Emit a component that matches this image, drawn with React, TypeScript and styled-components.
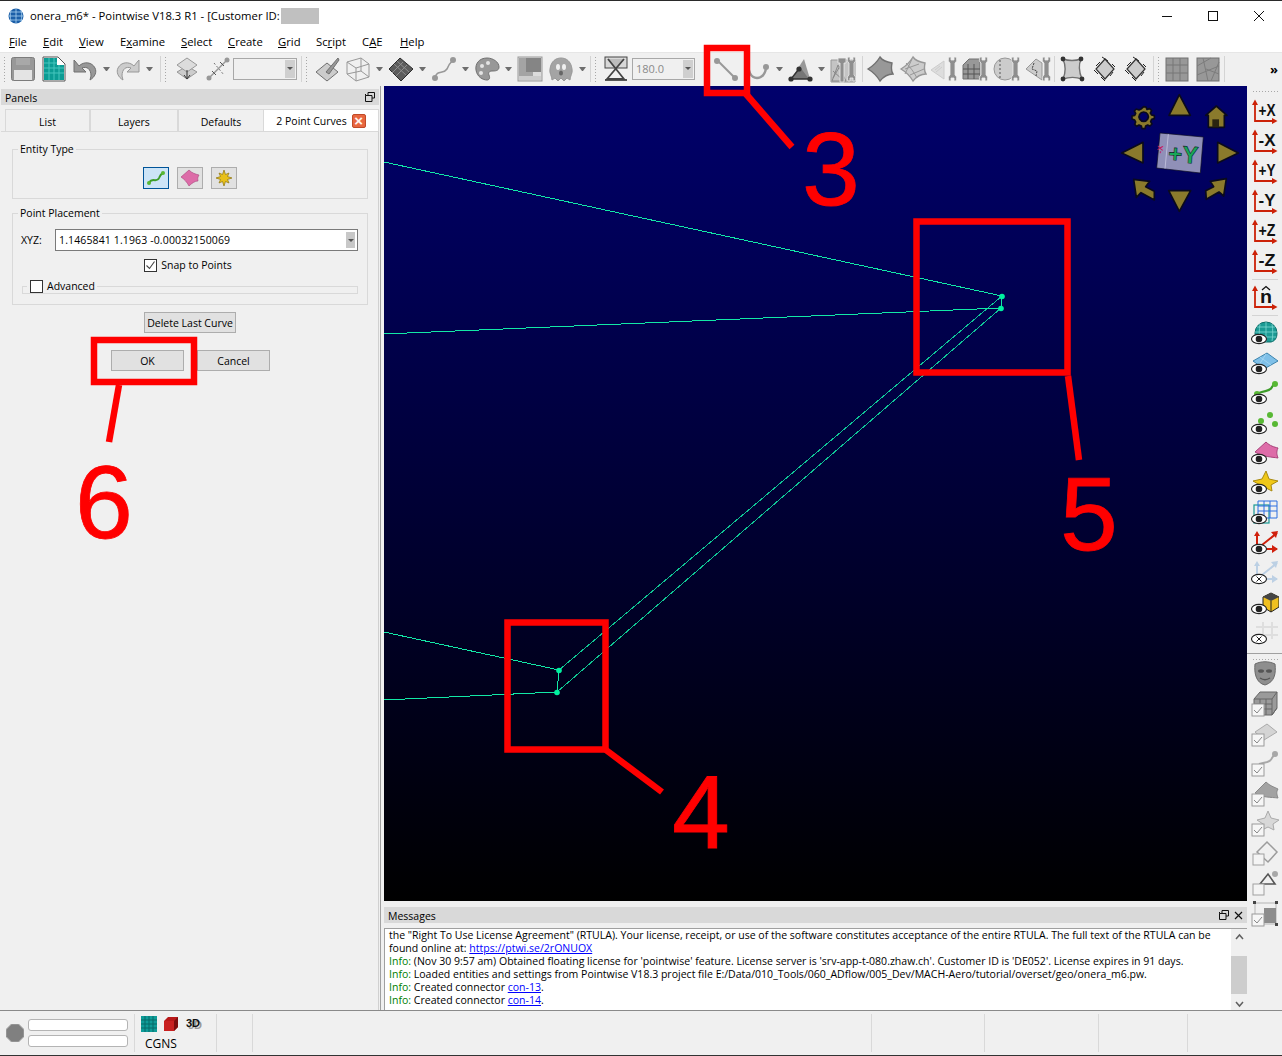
import { ReactNode } from "react";
import styled, { createGlobalStyle } from "styled-components";

const GlobalStyle = createGlobalStyle`
  html, body {
    margin: 0;
    padding: 0;
    background: #f0f0f0;
  }
  * {
    box-sizing: border-box;
  }
`;

const Window = styled.div`
  border-top: 1px solid #2a2a2a;
  color: #000000;
  display: flex;
  flex-direction: column;
  font-family: "Open Sans", "Noto Sans", sans-serif;
  font-size: 10.5px;
  height: 1056px;
  overflow: hidden;
  position: relative;
  width: 1282px;
`;

const TitleBar = styled.div`
  align-items: center;
  background: #ffffff;
  display: flex;
  flex: 0 0 29px;
  font-size: 11.3px;
  padding-left: 8px;
`;

const TitleText = styled.span`
  margin-left: 6px;
  white-space: nowrap;
`;

const CensorBlock = styled.span`
  background: #c0c0c0;
  height: 16px;
  margin-left: 1px;
  width: 38px;
`;

const WindowButtons = styled.div`
  display: flex;
  margin-left: auto;
`;

const WindowButton = styled.div`
  align-items: center;
  display: flex;
  height: 29px;
  justify-content: center;
  width: 46px;
`;

const MenuBar = styled.div`
  align-items: center;
  background: #ffffff;
  display: flex;
  flex: 0 0 22px;
  font-size: 11.3px;
`;

const MenuItem = styled.span<{ $width: number }>`
  padding-left: 9px;
  width: ${({ $width }) => $width}px;
`;

const Toolbar = styled.div`
  align-items: center;
  background: #f0f0f0;
  border-top: 1px solid #e6e6e6;
  display: flex;
  flex: 0 0 34px;
  padding-bottom: 2px;
`;

const Grip = styled.div<{ $after?: number }>`
  background-image: radial-gradient(#a8a8a8 35%, transparent 40%);
  background-size: 3px 3px;
  height: 26px;
  margin: 0 ${({ $after }) => $after ?? 3}px 0 3px;
  width: 4px;
`;

const ToolSeparator = styled.div<{ $left?: number }>`
  background: #d4d4d4;
  height: 26px;
  margin-left: ${({ $left }) => $left ?? 0}px;
  width: 1px;
`;

const ToolButton = styled.div<{ $gap?: number }>`
  align-items: center;
  display: flex;
  flex: 0 0 ${({ $gap }) => $gap ?? 31}px;
  height: 30px;
  justify-content: center;
`;

const DropArrow = styled.div`
  border-left: 3.5px solid transparent;
  border-right: 3.5px solid transparent;
  border-top: 4px solid #6e6e6e;
  flex: 0 0 7px;
  height: 0;
  margin: 0 2.5px;
`;

const Combo = styled.div<{ $width: number }>`
  align-items: center;
  background: #f0f0f0;
  border: 1px solid #a8a8a8;
  color: #8a8a8a;
  display: flex;
  flex: 0 0 ${({ $width }) => $width}px;
  font-size: 11px;
  height: 22px;
  justify-content: space-between;
  padding: 1px 1px 1px 3px;
`;

const ComboDrop = styled.div`
  align-items: center;
  background: #cfcfcf;
  display: flex;
  height: 100%;
  justify-content: center;
  width: 10px;
`;

const SmallTriangle = styled.div`
  border-left: 3px solid transparent;
  border-right: 3px solid transparent;
  border-top: 3px solid #555555;
  height: 0;
  width: 0;
`;

const OverflowMark = styled.div`
  font-size: 13px;
  font-weight: 700;
  margin-left: auto;
  padding-right: 4px;
`;

const MainRow = styled.div`
  display: flex;
  flex: 1;
  min-height: 0;
`;

const LeftPanel = styled.div`
  background: #f0f0f0;
  border-right: 1px solid #a0a0a0;
  display: flex;
  flex: 0 0 380px;
  flex-direction: column;
  padding: 3px 1px 0 1px;
`;

const DockHeader = styled.div`
  align-items: center;
  background: #d9d9d9;
  display: flex;
  flex: 0 0 16px;
  font-size: 10.5px;
  justify-content: space-between;
  padding: 0 4px;
`;

const DockTitle = styled.span`
  padding-top: 2px;
`;

const DockButtons = styled.div`
  align-items: center;
  display: flex;
  gap: 5px;
`;

const TabStrip = styled.div`
  display: flex;
  margin-top: 4px;
  padding-left: 4px;
`;

const Tab = styled.div<{ $width: number; $active?: boolean }>`
  align-items: center;
  background: ${({ $active }) => ($active ? "#ffffff" : "#f0f0f0")};
  border: 1px solid #d9d9d9;
  border-bottom: 0;
  border-left-width: ${({ $active }) => ($active ? 0 : 1)}px;
  display: flex;
  gap: 5px;
  height: 22px;
  justify-content: center;
  padding-top: ${({ $active }) => ($active ? 0 : 2)}px;
  width: ${({ $width }) => $width}px;
`;

const CloseTab = styled.div`
  align-items: center;
  background: #e8663f;
  border: 1px solid #c04a28;
  border-radius: 2px;
  color: #fff4ee;
  display: flex;
  font-family: "Liberation Sans", sans-serif;
  font-size: 15px;
  font-weight: 700;
  height: 14px;
  justify-content: center;
  line-height: 1;
  width: 14px;
`;

const PanelBody = styled.div`
  border-right: 1px solid #d0d0d0;
  border-top: 1px solid #d9d9d9;
  display: flex;
  flex: 1;
  flex-direction: column;
  padding: 11px 10px 0 11px;
`;

const Group = styled.fieldset<{ $height: number }>`
  border: 1px solid #d9d9d9;
  height: ${({ $height }) => $height}px;
  margin: 0 0 8px 0;
  min-width: 0;
  padding: 0 8px;
`;

const GroupLegend = styled.legend`
  font-size: 10.5px;
  line-height: 12px;
  margin-left: -3px;
  padding: 0 2px;
`;

const EntityRow = styled.div`
  display: flex;
  gap: 8px;
  justify-content: center;
  padding-top: 12px;
`;

const EntityButton = styled.div<{ $selected?: boolean }>`
  align-items: center;
  background: ${({ $selected }) => ($selected ? "#cce4f7" : "#e1e1e1")};
  border: 1px solid ${({ $selected }) => ($selected ? "#005499" : "#adadad")};
  display: flex;
  height: 22px;
  justify-content: center;
  width: 26px;
`;

const XyzRow = styled.div`
  align-items: center;
  display: flex;
  margin-top: 10px;
`;

const XyzLabel = styled.span`
  flex: 0 0 34px;
`;

const XyzInput = styled.div`
  align-items: center;
  background: #ffffff;
  border: 1px solid #7a7a7a;
  display: flex;
  flex: 0 0 303px;
  height: 22px;
  justify-content: space-between;
  letter-spacing: 0.13px;
  padding: 0 2px 0 3px;
`;

const InputDrop = styled.div`
  align-items: center;
  background: #c8c8c8;
  display: flex;
  height: 16px;
  justify-content: center;
  width: 9px;
`;

const SnapRow = styled.div`
  align-items: center;
  display: flex;
  gap: 4px;
  justify-content: center;
  margin-top: 7px;
  padding-right: 4px;
`;

const CheckBox = styled.div`
  align-items: center;
  background: #ffffff;
  border: 1px solid #333333;
  display: flex;
  height: 13px;
  justify-content: center;
  width: 13px;
`;

const AdvancedRow = styled.div`
  display: flex;
  margin: 7px 1px 0 9px;
  position: relative;
`;

const AdvancedFrame = styled.div`
  border: 1px solid #d9d9d9;
  height: 8px;
  left: -8px;
  position: absolute;
  right: 0;
  top: 7px;
`;

const AdvancedLegend = styled.div`
  align-items: center;
  background: #f0f0f0;
  display: flex;
  gap: 4px;
  margin-left: -3px;
  padding: 0 2px 0 3px;
  position: relative;
`;

const ButtonLine = styled.div<{ $left: number; $top: number }>`
  display: flex;
  gap: 13px;
  margin-left: ${({ $left }) => $left}px;
  margin-top: ${({ $top }) => $top}px;
`;

const PushButton = styled.div<{ $width: number }>`
  align-items: center;
  background: #e1e1e1;
  border: 1px solid #adadad;
  display: flex;
  height: 21px;
  justify-content: center;
  width: ${({ $width }) => $width}px;
`;

const CenterColumn = styled.div`
  display: flex;
  flex: 0 0 866px;
  flex-direction: column;
  padding-left: 3px;
`;

const Viewport = styled.div`
  background: linear-gradient(#00006c 0%, #000000 100%);
  flex: 0 0 815px;
  overflow: hidden;
  position: relative;
`;

const CurveLayer = styled.svg`
  display: block;
  height: 815px;
  width: 863px;
`;

const NavCube = styled.svg`
  height: 136px;
  position: absolute;
  right: 0;
  top: 0;
  width: 136px;
`;

const MessageDock = styled.div`
  display: flex;
  flex: 1;
  flex-direction: column;
  min-height: 0;
  padding-top: 6px;
`;

const MessagePane = styled.div`
  background: #ffffff;
  border-left: 1px solid #a0a0a0;
  border-top: 1px solid #a0a0a0;
  display: flex;
  flex: 1;
  margin-top: 5px;
  min-height: 0;
`;

const MessageText = styled.div`
  flex: 1;
  font-size: 10.54px;
  line-height: 13px;
  padding: 0 0 0 4px;
`;

const InfoWord = styled.span`
  color: #008000;
`;

const MessageLink = styled.span`
  color: #0000ff;
  text-decoration: underline;
`;

const ScrollBar = styled.div`
  align-items: center;
  background: #f0f0f0;
  display: flex;
  flex: 0 0 16px;
  flex-direction: column;
  justify-content: space-between;
  padding: 4px 0 2px 0;
  position: relative;
`;

const ScrollThumb = styled.div`
  background: #cdcdcd;
  height: 38px;
  left: 0;
  position: absolute;
  top: 27px;
  width: 16px;
`;

const RightToolbar = styled.div`
  background: #f0f0f0;
  display: flex;
  flex: 0 0 36px;
  flex-direction: column;
  padding-top: 3px;
`;

const VerticalGrip = styled.div`
  background-image: radial-gradient(#a8a8a8 35%, transparent 40%);
  background-size: 3px 3px;
  flex: 0 0 4px;
  margin: 1px 5px 2px 5px;
`;

const LowerGrip = styled(VerticalGrip)`
  margin-bottom: -4px;
`;

const SideButton = styled.div`
  align-items: center;
  display: flex;
  flex: 0 0 30px;
  justify-content: center;
`;

const SideSeparator = styled.div<{ $full?: boolean }>`
  background: ${({ $full }) => ($full ? "#a0a0a0" : "#d4d4d4")};
  flex: 0 0 1px;
  margin: ${({ $full }) => ($full ? "5px 0 3px 0" : "2.5px 5px")};
`;

const StatusBar = styled.div`
  align-items: stretch;
  background: #f0f0f0;
  border-bottom: 1px solid #333333;
  border-top: 1px solid #8a8a8a;
  display: flex;
  flex: 0 0 45px;
`;

const StatusCell = styled.div<{ $width: number }>`
  border-right: 1px solid #d9d9d9;
  flex: 0 0 ${({ $width }) => $width}px;
  margin: 3px 0 3px 0;
`;

const LightCell = styled(StatusCell)`
  align-items: center;
  display: flex;
  gap: 4px;
  padding-left: 6px;
`;

const ProgressStack = styled.div`
  display: flex;
  flex-direction: column;
  gap: 4px;
`;

const ProgressTrack = styled.div`
  background: #ffffff;
  border: 1px solid #b4b4b4;
  border-radius: 3px;
  height: 12px;
  width: 100px;
`;

const GridCell = styled(StatusCell)`
  display: flex;
  flex-direction: column;
  padding: 2px 0 0 6px;
`;

const SolverIcons = styled.div`
  align-items: center;
  display: flex;
  gap: 6px;
`;

const SolverName = styled.div`
  font-size: 12px;
  margin: 3px 0 0 4px;
`;

const Annotations = styled.svg`
  height: 1056px;
  left: 0;
  pointer-events: none;
  position: absolute;
  top: -1px;
  width: 1282px;
`;

const GREY = "#989898";
const DARK = "#707070";
const LIGHT = "#cccccc";
const WRENCH = "M19 2c-1 2-1 5 1 6v12c-2 1-2 4-1 6h2v-3h3v3h2c1-2 1-5-1-6V8c2-1 2-4 1-6h-2v3h-3V2z";

const Wrench = () => <path d={WRENCH} fill="#8e8e8e" stroke="#ececec" strokeWidth="0.8" />;

const Ico = ({ children, size = 28 }: { children: ReactNode; size?: number }) => (
  <svg width={size} height={size} viewBox="0 0 28 28">
    {children}
  </svg>
);

const toolIcons: Record<string, ReactNode> = {
  save: (
    <>
      <rect x="2.5" y="2.5" width="23" height="23" rx="2" fill={GREY} stroke="#7c7c7c" />
      <rect x="7" y="3" width="14" height="7" fill="#a8a8a8" />
      <rect x="5" y="15" width="18" height="10" fill="#e4e4e4" />
    </>
  ),
  page: (
    <>
      <path d="M3 2h15l7 7v17H3z" fill="#ffffff" stroke="#555" />
      <path d="M4 3h13v7h7v15H4z" fill="#0c9c94" />
      <path d="M9 3v22M14 3v22M19 10v15M4 8h13M4 13h20M4 18h20" stroke="#46c6be" />
    </>
  ),
  undo: <path d="M3 5v12h12l-4-4c5-2 9 1 9 8l-1 4c5-3 7-8 5-12-3-6-11-7-16-2L4 6z" fill={GREY} stroke={DARK} />,
  redo: <path d="M25 5v12H13l4-4c-5-2-9 1-9 8l1 4c-5-3-7-8-5-12 3-6 11-7 16-2l4-5z" fill={LIGHT} stroke={GREY} />,
  layers: (
    <>
      <path d="M14 11l10 6-10 7-10-7z" fill={LIGHT} stroke={GREY} />
      <path d="M14 3l10 7-10 7-10-7z" fill="#dcdcdc" stroke={GREY} />
      <path d="M14 15v8M11 20l3 4 3-4" stroke="#333" fill="none" />
    </>
  ),
  split: (
    <>
      <path d="M4 24L24 4" stroke={GREY} strokeWidth="1.5" />
      <path d="M10 8l10 12" stroke={DARK} strokeDasharray="2 2" />
      <circle cx="5" cy="23" r="2.5" fill={GREY} />
      <circle cx="23" cy="5" r="2.5" fill={GREY} />
      <path d="M16 7l4 4M8 16l4 4" stroke="#555" />
    </>
  ),
  brush: (
    <>
      <path d="M3 17l11-9 11 9-11 9z" fill={LIGHT} stroke={DARK} />
      <path d="M13 17L25 3l1 2-10 14z" fill={GREY} stroke={DARK} />
    </>
  ),
  wire: <path d="M3 7l14-4 8 6v13l-13 4-9-7zM3 7l9 6v13M12 13l13-4M17 3v13L3 19M17 16l8 6" fill="none" stroke={GREY} />,
  mesh: (
    <>
      <path d="M2 14L13 3l13 11-12 12z" fill="#5c5c5c" stroke="#2c2c2c" />
      <path d="M7 9l12 11M10 6l12 11M5 18L16 7M9 21L20 10" stroke="#8e8e8e" />
    </>
  ),
  curve: (
    <>
      <path d="M5 23c2-9 8-3 12-9 1-3 3-6 6-9" fill="none" stroke={GREY} strokeWidth="1.6" />
      <circle cx="5" cy="23" r="3" fill={GREY} />
      <circle cx="23" cy="5" r="3" fill={GREY} />
    </>
  ),
  palette: (
    <>
      <path d="M14 3C6 3 2 9 3 15c1 7 7 10 11 10 3 0 3-3 2-5s0-4 3-4 7 0 7-4c0-5-6-9-12-9z" fill={GREY} stroke={DARK} />
      <circle cx="9" cy="11" r="2" fill="#e4e4e4" />
      <circle cx="15" cy="8" r="2" fill="#e4e4e4" />
      <circle cx="8" cy="18" r="2" fill="#e4e4e4" />
    </>
  ),
  squares: (
    <>
      <rect x="2" y="2" width="24" height="24" fill="#dcdcdc" stroke="#999" />
      <rect x="3" y="3" width="14" height="20" fill="#a4a4a4" />
      <rect x="10" y="3" width="15" height="14" fill="#858585" />
      <rect x="3" y="21" width="22" height="4" fill={LIGHT} />
    </>
  ),
  ghost: (
    <>
      <path d="M5 25c0-4-3-7-2-11C4 6 9 3 14 3s10 3 11 11c1 4-2 7-2 11l-3-2-3 3-3-3-3 3-3-3z" fill="#a4a4a4" stroke={GREY} />
      <ellipse cx="11" cy="12" rx="2" ry="3" fill="#f0f0f0" />
      <ellipse cx="17" cy="12" rx="2" ry="3" fill="#f0f0f0" />
      <ellipse cx="14" cy="18" rx="2" ry="2.5" fill="#666" />
    </>
  ),
  plane: (
    <>
      <rect x="3" y="2" width="22" height="11" fill="#d8d8d8" stroke="#444" />
      <path d="M14 13l-8-9h16z" fill="#bcbcbc" />
      <path d="M6 4l16 20H5L22 4" fill="none" stroke="#444" strokeWidth="1.8" />
      <path d="M3 25h22" stroke="#444" strokeWidth="1.8" />
    </>
  ),
  line: (
    <>
      <path d="M6 6l17 17" stroke={GREY} strokeWidth="2" />
      <circle cx="5" cy="6" r="3" fill={GREY} />
      <circle cx="23" cy="23" r="3" fill={GREY} />
    </>
  ),
  arc: (
    <>
      <path d="M5 4c-1 12 3 19 9 19s8-5 9-9" fill="none" stroke={GREY} strokeWidth="2.4" />
      <circle cx="23" cy="12" r="3" fill={GREY} />
    </>
  ),
  wedge: (
    <>
      <path d="M5 24L18 4l6 20z" fill={GREY} />
      <path d="M14 12L6 24h17" fill="#767676" />
      <path d="M5 24h19M5 24l8-10" stroke="#333" strokeWidth="1.4" />
      <circle cx="5" cy="24" r="2.6" fill="#333" />
      <circle cx="24" cy="24" r="2.6" fill="#333" />
      <circle cx="13" cy="14" r="2.6" fill="#333" />
    </>
  ),
  tools: (
    <>
      <path d="M2 5h24v22H2z" fill="#c4c4c4" stroke={GREY} />
      <path d="M3 26L9 10l8 16zM4 16l11 10M11 11l-7 12" fill="none" stroke="#888" />
      <path d="M9 3h8v5h-2v19h-4V8H9z" fill="#8e8e8e" stroke="#eee" strokeWidth="0.8" />
      <Wrench />
    </>
  ),
  domain: <path d="M14 2c2 3 6 5 12 6-1 5-1 8 1 11-5 0-9 2-13 7-3-5-7-9-12-12 5-3 9-7 12-12z" fill={GREY} stroke={DARK} strokeWidth="1.4" />,
  domainGrid: (
    <>
      <path d="M14 2c2 3 6 5 12 6-1 5-1 8 1 11-5 0-9 2-13 7-3-5-7-9-12-12 5-3 9-7 12-12z" fill={LIGHT} stroke={GREY} strokeWidth="1.4" />
      <path d="M7 8c4 4 8 9 11 15M13 4l-7 15M6 14l14-5M11 20l14-6" stroke={GREY} fill="none" />
    </>
  ),
  wrenchA: (
    <>
      <path d="M1 15L14 6v18z" fill="#dddddd" stroke={LIGHT} />
      <path d="M5 15l5-4M6 17l6-5" stroke={LIGHT} />
      <Wrench />
    </>
  ),
  wrenchB: (
    <>
      <path d="M2 10l6-6h11v20H2z" fill={GREY} stroke={DARK} />
      <path d="M2 14h17M2 19h17M7 9v15M13 9v15" stroke="#555" />
      <Wrench />
    </>
  ),
  wrenchC: (
    <>
      <circle cx="12" cy="14" r="11" fill={LIGHT} stroke={GREY} />
      <path d="M7 5v18" stroke="#555" strokeDasharray="2 2" />
      <Wrench />
    </>
  ),
  wrenchD: (
    <>
      <path d="M2 14L12 4l6 4v17z" fill={LIGHT} stroke={GREY} />
      <path d="M10 8l-2 6 5 2-1 5" stroke="#444" strokeDasharray="2 1" fill="none" />
      <Wrench />
    </>
  ),
  patch: (
    <>
      <path d="M5 4c6 2 12 2 18 0-3 7-2 13 1 20-6-2-13-2-19 0 3-7 3-13 0-20z" fill={LIGHT} stroke={DARK} strokeWidth="1.4" />
      <circle cx="5" cy="4" r="2.4" fill="#333" />
      <circle cx="23" cy="4" r="2.4" fill="#333" />
      <circle cx="5" cy="24" r="2.4" fill="#333" />
      <circle cx="24" cy="24" r="2.4" fill="#333" />
    </>
  ),
  diamond: (
    <>
      <path d="M14 4l9 10-9 10-9-10z" fill="#cccccc" stroke="#333" strokeWidth="1.2" />
      <path d="M11 2l6 4M21 9l3 3M22 17l-3 4M5 11l4-4M3 15l4 4M10 22l4 4" stroke="#222" />
    </>
  ),
  struct: (
    <>
      <rect x="3" y="3" width="22" height="23" fill={GREY} stroke={DARK} />
      <path d="M10 3v23M17 3v23M3 10h22M3 18h22" stroke="#777" />
    </>
  ),
  unstruct: (
    <>
      <rect x="3" y="3" width="22" height="23" fill={GREY} stroke={DARK} />
      <path d="M3 11L17 3M3 20l22-9M9 3l5 23M25 19L12 14M17 26l8-19" stroke="#7c7c7c" />
    </>
  ),
};

const Tool = ({ name, gap, size = 28 }: { name: string; gap?: number; size?: number }) => (
  <ToolButton $gap={gap}>
    <Ico size={size}>{toolIcons[name]}</Ico>
  </ToolButton>
);

const Eye = ({ crossed }: { crossed?: boolean }) => (
  <g>
    <ellipse cx="8" cy="20" rx="7.5" ry="4.6" fill="#ffffff" stroke="#222" strokeWidth="1.1" />
    {crossed ? <path d="M5.5 17.5l5 5M10.5 17.5l-5 5" stroke="#222" /> : <circle cx="8" cy="20" r="3.3" fill="#222" />}
  </g>
);

const Check = () => (
  <g>
    <rect x="1" y="15" width="12" height="12" fill="#f6f6f6" stroke="#9a9a9a" />
    <path d="M3 21l3 3 5-6" stroke="#888" fill="none" />
  </g>
);

const AxisIcon = ({ label, hat }: { label: string; hat?: boolean }) => (
  <svg width="26" height="26" viewBox="0 0 26 26">
    <path d="M3 5v18h19" fill="none" stroke="#cc2208" strokeWidth="1.8" />
    <path d="M0 7L3 1.5 6 7zM20 20l5.5 3-5.5 3z" fill="#cc2208" />
    <text
      x={hat ? 8 : 6.5}
      y={hat ? 19 : 17.5}
      fontFamily="Liberation Sans"
      fontWeight="700"
      fontSize={hat ? 18 : 16.5}
      fill="#111"
      textLength={hat ? 12 : 17}
      lengthAdjust="spacingAndGlyphs"
    >
      {label}
    </text>
    {hat ? <path d="M10 6l4-3.5L18 6" fill="none" stroke="#111" strokeWidth="1.3" /> : null}
  </svg>
);

const sideIcons: Record<string, ReactNode> = {
  globe: (
    <>
      <path d="M4 14a11 11 0 0 1 22 0c0 5-2 8-6 9H8c-3-2-4-5-4-9z" fill="#1a9a94" stroke="#0d6e6a" />
      <path d="M15 3v20M9 5c-1 6-1 12 0 17M21 5c1 6 1 12 0 17M4 13h22M6 8h18M5 18h20" stroke="#7fd8d2" strokeWidth="0.8" fill="none" />
      <Eye />
    </>
  ),
  plane: (
    <>
      <path d="M2 12L16 4l11 8-14 8z" fill="#7fc0e8" stroke="#3d84ad" />
      <path d="M9 8l11 8M15 5l-7 11" stroke="#a9d8f2" strokeWidth="0.8" />
      <Eye />
    </>
  ),
  curve: (
    <>
      <path d="M8 14c6-3 11-1 13-6l2-3" fill="none" stroke="#3c9c28" strokeWidth="2.2" />
      <circle cx="24" cy="5" r="3" fill="#58b834" />
      <circle cx="6" cy="15" r="3" fill="#58b834" />
      <Eye />
    </>
  ),
  points: (
    <>
      <circle cx="19" cy="6" r="3" fill="#58b834" />
      <circle cx="10" cy="12" r="3" fill="#58b834" />
      <circle cx="24" cy="15" r="3" fill="#58b834" />
      <Eye />
    </>
  ),
  domain: (
    <>
      <path d="M4 13L15 3c4 4 8 5 12 6-2 4-1 7 0 10-6-1-15-1-23-6z" fill="#dd6ca8" stroke="#a8437a" />
      <Eye />
    </>
  ),
  star: (
    <>
      <path d="M15 2l3 8 9 2-7 4 1 6-6-3-7 3 1-6-7-4 9-2z" fill="#f0c818" stroke="#a88a10" />
      <Eye />
    </>
  ),
  grid: (
    <>
      <rect x="3" y="6" width="15" height="18" fill="none" stroke="#1a9a94" strokeWidth="1.2" />
      <path d="M7 2h19v17H7zM7 7h19M7 12h19M13 2v17M19 2v17" fill="none" stroke="#2c6fe0" strokeWidth="1" />
      <Eye />
    </>
  ),
  axes: (
    <>
      <path d="M6 20V5M6 20L26 4M6 20h20" stroke="#d0200c" strokeWidth="2" fill="none" />
      <path d="M3 7l3-5 3 5zM20 3l7-1-2 7zM21 16l6 4-6 4z" fill="#d0200c" />
      <Eye />
    </>
  ),
  axesOff: (
    <>
      <path d="M6 20V5M6 20L26 4M6 20h20" stroke="#bcd0e4" strokeWidth="2" fill="none" />
      <path d="M3 7l3-5 3 5zM20 3l7-1-2 7zM21 16l6 4-6 4z" fill="#bcd0e4" />
      <Eye crossed />
    </>
  ),
  cube: (
    <>
      <path d="M12 8l8-4 8 4v10l-8 5-8-5z" fill="#f0c020" stroke="#222" />
      <path d="M12 8l8 4 8-4-8-4z" fill="#444" />
      <path d="M20 12v11" stroke="#222" />
      <Eye />
    </>
  ),
  hash: (
    <>
      <path d="M12 3v17M21 3v17M5 8h22M5 16h22" stroke="#dedede" strokeWidth="2" />
      <Eye crossed />
    </>
  ),
  mask: (
    <>
      <path d="M4 5c6-3 14-3 20 0 1 9 0 18-10 21C5 24 3 14 4 5z" fill="#8e8e8e" stroke="#6a6a6a" />
      <ellipse cx="10" cy="12" rx="3" ry="1.8" fill="#555" />
      <ellipse cx="18" cy="12" rx="3" ry="1.8" fill="#555" />
      <path d="M9 19c3 2 7 2 10 0" stroke="#555" strokeWidth="1.5" fill="none" />
    </>
  ),
  block: (
    <>
      <path d="M3 10l6-7h17v16l-5 7H3z" fill="#9a9a9a" stroke="#666" />
      <path d="M3 15h18M3 20h18M9 10v16M15 10v16M21 10v16l5-7M3 10h18l5-7" fill="none" stroke="#666" />
      <Check />
    </>
  ),
  planeCheck: (
    <>
      <path d="M4 13L16 5l10 8-13 8z" fill="#d4d4d4" stroke="#aaa" />
      <Check />
    </>
  ),
  curveCheck: (
    <>
      <path d="M8 15c6-2 11-1 13-6l2-3" fill="none" stroke="#a8a8a8" strokeWidth="2" />
      <circle cx="24" cy="5" r="3" fill="#a8a8a8" />
      <Check />
    </>
  ),
  domainCheck: (
    <>
      <path d="M4 14L15 3c4 4 8 5 12 7-2 3-1 6 0 9-7-1-15 0-23-5z" fill="#a2a2a2" stroke="#888" />
      <Check />
    </>
  ),
  starCheck: (
    <>
      <path d="M17 2l3 7 8 2-6 4 1 6-6-3-6 3 1-6-6-4 8-2z" fill="#d8d8d8" stroke="#aaa" />
      <Check />
    </>
  ),
  diamondBox: (
    <>
      <path d="M6 13L16 3l10 10-9 10z" fill="none" stroke="#9c9c9c" strokeWidth="1.5" />
      <rect x="2" y="15" width="11" height="11" fill="#f4f4f4" stroke="#a0a0a0" />
    </>
  ),
  triangleBox: (
    <>
      <path d="M9 15l8-10 7 10z" fill="none" stroke="#555" strokeWidth="1.6" />
      <circle cx="24" cy="5" r="3" fill="#a8a8a8" />
      <rect x="2" y="15" width="11" height="11" fill="#f4f4f4" stroke="#a0a0a0" />
    </>
  ),
  selectBox: (
    <>
      <rect x="4" y="4" width="21" height="21" fill="none" stroke="#b4b4b4" />
      <rect x="13" y="9" width="12" height="15" fill="#8c8c8c" />
      <rect x="2" y="2" width="3" height="3" fill="#444" />
      <rect x="24" y="2" width="3" height="3" fill="#444" />
      <rect x="24" y="24" width="3" height="3" fill="#444" />
      <Check />
    </>
  ),
};

const SideIcon = ({ name }: { name: string }) => (
  <SideButton>
    <Ico>{sideIcons[name]}</Ico>
  </SideButton>
);

const menus: [ReactNode, number][] = [
  [<><u>F</u>ile</>, 34],
  [<><u>E</u>dit</>, 36],
  [<><u>V</u>iew</>, 41],
  [<>E<u>x</u>amine</>, 61],
  [<><u>S</u>elect</>, 47],
  [<><u>C</u>reate</>, 50],
  [<><u>G</u>rid</>, 38],
  [<>Sc<u>r</u>ipt</>, 46],
  [<>C<u>A</u>E</>, 38],
  [<><u>H</u>elp</>, 40],
];

const RestoreIcon = () => (
  <svg width="10" height="10" viewBox="0 0 10 10">
    <path d="M3 .5h6.5V6H7M.5 3.5H7v6H.5zM.5 3.5V2M3 .5v3" fill="none" stroke="#111" />
  </svg>
);

const Chevron = ({ up }: { up?: boolean }) => (
  <svg width="9" height="7" viewBox="0 0 9 7">
    <path d={up ? "M1 6l3.5-4L8 6" : "M1 1l3.5 4L8 1"} fill="none" stroke="#606060" strokeWidth="1.5" />
  </svg>
);

const Curves = () => (
  <CurveLayer viewBox="383 86 863 815">
    <g fill="none" stroke="#12e8a6" strokeWidth="1" shapeRendering="crispEdges">
      <path d="M383 162L1001 296M383 334L1000 308M1001 296L1000 308" />
      <path d="M1001 296L558 670M1000 308L556 692" strokeOpacity="0.85" />
      <path d="M383 632L558 670M383 700L556 692M558 670L556 692" />
    </g>
    <g fill="#00f0a0">
      <circle cx="1001" cy="296.500" r="2.8" />
      <circle cx="1000" cy="308.500" r="2.8" />
      <circle cx="558" cy="670.500" r="2.8" />
      <circle cx="556" cy="692.500" r="2.8" />
    </g>
  </CurveLayer>
);

const Nav = () => (
  <NavCube viewBox="0 -6 408 408">
    <g fill="#8a7a2c" stroke="#0a0a1c" strokeWidth="5" strokeLinejoin="round">
      <path d="M205 20l33 62h-64z" />
      <path d="M205 370l-32-62h66z" />
      <path d="M32 195l64-32v62z" />
      <path d="M382 195l-62-32v62z" />
      <path d="M68 274l48 6-12 16 26 14v26l-40-22-14 14z" />
      <path d="M346 272l-48 8 10 16-24 12 2 26 38-22 14 12z" />
      <path d="M284 82l32-28 32 28h-8v36h-48V82z" />
      <path fillRule="evenodd" d="M98 56l7 1 3 7 8-2 6 6-4 7 4 6 8 2v9l-8 2-3 7 4 7-6 6-7-3-6 3-2 8h-9l-2-8-7-3-7 4-6-6 3-7-3-6-8-3v-9l8-2 3-6-4-7 6-6 8 3 6-3zM98 72a14 14 0 1 0 .1 0z" />
    </g>
    <rect x="304" y="94" width="20" height="24" fill="#2a2410" />
    <path d="M147 135l130 12-9 108-131-15z" fill="#9090b8" stroke="#0a0a1c" strokeWidth="2" />
    <path d="M172 138l-10 104" stroke="#d0d0e8" strokeWidth="2" />
    <text x="172" y="224" fontFamily="Liberation Sans" fontWeight="700" fontSize="72" fill="#18a858" stroke="#0a0a1c" strokeWidth="1.5" transform="rotate(4 220 200)">
      +Y
    </text>
    <text x="148" y="190" fontFamily="Liberation Sans" fontWeight="700" fontSize="24" fill="#c02060" transform="rotate(-85 155 190)">
      -X
    </text>
  </NavCube>
);

const Marks = () => (
  <Annotations viewBox="0 0 1282 1056">
    <g fill="none" stroke="#ff0000" strokeWidth="6.5">
      <rect x="707" y="48" width="40" height="45" />
      <path d="M746 94L792 147" />
      <rect x="916.5" y="221.5" width="151" height="151" />
      <path d="M1068 376L1079 460" />
      <rect x="507.5" y="622.5" width="98" height="127" />
      <path d="M606 750L662 792" />
      <rect x="94" y="340" width="100" height="42" />
      <path d="M119 385L109 442" />
    </g>
    <g fill="#ff0000" stroke="#ff0000" strokeWidth="0.8" fontFamily="Liberation Sans" fontSize="104">
      <text x="802" y="205">3</text>
      <text x="1060" y="550">5</text>
      <text x="672" y="848">4</text>
      <text x="75" y="538">6</text>
    </g>
  </Annotations>
);

const App = () => {
  return (
    <Window>
      <GlobalStyle />
      <TitleBar>
        <svg width="16" height="16" viewBox="0 0 16 16">
          <circle cx="8" cy="8" r="7.5" fill="#1c5fa8" />
          <path d="M8 .5v15M3 2.5c-1 4-1 7 0 11M13 2.5c1 4 1 7 0 11M.5 8h15M2 4h12M2 12h12" stroke="#a8d0f0" strokeWidth="0.8" fill="none" />
        </svg>
        <TitleText>onera_m6* - Pointwise V18.3 R1 - [Customer ID:</TitleText>
        <CensorBlock />
        <WindowButtons>
          <WindowButton>
            <svg width="10" height="10" viewBox="0 0 10 10">
              <path d="M0 5.5h10" stroke="#111" />
            </svg>
          </WindowButton>
          <WindowButton>
            <svg width="10" height="10" viewBox="0 0 10 10">
              <rect x=".5" y=".5" width="9" height="9" fill="none" stroke="#111" />
            </svg>
          </WindowButton>
          <WindowButton>
            <svg width="10" height="10" viewBox="0 0 10 10">
              <path d="M0 0l10 10M10 0L0 10" stroke="#111" />
            </svg>
          </WindowButton>
        </WindowButtons>
      </TitleBar>
      <MenuBar>
        {menus.map(([label, width], index) => (
          <MenuItem key={index} $width={width}>
            {label}
          </MenuItem>
        ))}
      </MenuBar>
      <Toolbar>
        <Grip $after={0} />
        <Tool name="save" />
        <Tool name="page" />
        <Tool name="undo" />
        <DropArrow />
        <Tool name="redo" />
        <DropArrow />
        <ToolSeparator $left={5} />
        <Grip $after={3} />
        <Tool name="layers" />
        <Tool name="split" />
        <Combo $width={64}>
          <span />
          <ComboDrop>
            <SmallTriangle />
          </ComboDrop>
        </Combo>
        <ToolSeparator $left={4} />
        <Grip $after={2} />
        <Tool name="brush" />
        <Tool name="wire" />
        <DropArrow />
        <Tool name="mesh" />
        <DropArrow />
        <Tool name="curve" />
        <DropArrow />
        <Tool name="palette" />
        <DropArrow />
        <Tool name="squares" />
        <Tool name="ghost" />
        <DropArrow />
        <ToolSeparator $left={2} />
        <Grip $after={2} />
        <Tool name="plane" gap={32} />
        <Combo $width={63}>
          180.0
          <ComboDrop>
            <SmallTriangle />
          </ComboDrop>
        </Combo>
        <ToolButton $gap={15} />
        <Tool name="line" />
        <Tool name="arc" gap={32} />
        <DropArrow />
        <Tool name="wedge" gap={30} />
        <DropArrow />
        <Tool name="tools" />
        <ToolSeparator $left={4} />
        <Tool name="domain" gap={34} />
        <Tool name="domainGrid" />
        <Tool name="wrenchA" />
        <Tool name="wrenchB" gap={32} />
        <Tool name="wrenchC" />
        <Tool name="wrenchD" gap={32} />
        <ToolSeparator />
        <Tool name="patch" gap={34} />
        <Tool name="diamond" />
        <Tool name="diamond" />
        <ToolSeparator $left={2} />
        <Grip $after={0} />
        <Tool name="struct" gap={31} />
        <Tool name="unstruct" />
        <ToolSeparator $left={1} />
        <OverflowMark>»</OverflowMark>
      </Toolbar>
      <MainRow>
        <LeftPanel>
          <DockHeader>
            <DockTitle>Panels</DockTitle>
            <RestoreIcon />
          </DockHeader>
          <TabStrip>
            <Tab $width={85}>List</Tab>
            <Tab $width={88}>Layers</Tab>
            <Tab $width={86}>Defaults</Tab>
            <Tab $width={115} $active>
              2 Point Curves
              <CloseTab>×</CloseTab>
            </Tab>
          </TabStrip>
          <PanelBody>
            <Group $height={56}>
              <GroupLegend>Entity Type</GroupLegend>
              <EntityRow>
                <EntityButton $selected>
                  <svg width="20" height="16" viewBox="0 0 20 16">
                    <path d="M3 13c3-6 8 0 10-5 1-3 2-4 4-5" fill="none" stroke="#3c9c28" strokeWidth="2" />
                    <circle cx="3" cy="13" r="2" fill="#58b834" />
                    <circle cx="17" cy="3" r="2" fill="#58b834" />
                  </svg>
                </EntityButton>
                <EntityButton>
                  <svg width="20" height="18" viewBox="0 0 20 18">
                    <path d="M1 8l8-7c3 3 6 4 10 5-2 3-1 5-1 6-3 0-6 2-9 5-2-4-5-7-8-9z" fill="#dd6ca8" stroke="#a8437a" strokeWidth="0.6" />
                  </svg>
                </EntityButton>
                <EntityButton>
                  <svg width="18" height="18" viewBox="0 0 18 18">
                    <path d="M9 1l1.500 4.500L14 4l-1.500 3.500L17 9l-4.500 1.500L14 14l-3.500-1.500L9 17l-1.500-4.500L4 14l1.500-3.500L1 9l4.500-1.500L4 4l3.500 1.500z" fill="#e8c018" stroke="#8c7410" strokeWidth="0.7" />
                  </svg>
                </EntityButton>
              </EntityRow>
            </Group>
            <Group $height={98}>
              <GroupLegend>Point Placement</GroupLegend>
              <XyzRow>
                <XyzLabel>XYZ:</XyzLabel>
                <XyzInput>
                  1.1465841 1.1963 -0.00032150069
                  <InputDrop>
                    <SmallTriangle />
                  </InputDrop>
                </XyzInput>
              </XyzRow>
              <SnapRow>
                <CheckBox>
                  <svg width="11" height="11" viewBox="0 0 11 11">
                    <path d="M1.5 5.5l3 3 5-7" fill="none" stroke="#444" strokeWidth="1.1" />
                  </svg>
                </CheckBox>
                Snap to Points
              </SnapRow>
              <AdvancedRow>
                <AdvancedFrame />
                <AdvancedLegend>
                  <CheckBox />
                  Advanced
                </AdvancedLegend>
              </AdvancedRow>
            </Group>
            <ButtonLine $left={132} $top={-1}>
              <PushButton $width={92}>Delete Last Curve</PushButton>
            </ButtonLine>
            <ButtonLine $left={99} $top={17}>
              <PushButton $width={73}>OK</PushButton>
              <PushButton $width={73}>Cancel</PushButton>
            </ButtonLine>
          </PanelBody>
        </LeftPanel>
        <CenterColumn>
          <Viewport>
            <Curves />
            <Nav />
          </Viewport>
          <MessageDock>
            <DockHeader>
              <DockTitle>Messages</DockTitle>
              <DockButtons>
                <RestoreIcon />
                <svg width="9" height="9" viewBox="0 0 9 9">
                  <path d="M1 1l7 7M8 1L1 8" stroke="#111" strokeWidth="1.2" />
                </svg>
              </DockButtons>
            </DockHeader>
            <MessagePane>
              <MessageText>
                the "Right To Use License Agreement" (RTULA). Your license, receipt, or use of the software constitutes acceptance of the entire RTULA. The full text of the RTULA can be
                <br />
                found online at: <MessageLink>https://ptwi.se/2rONUOX</MessageLink>
                <br />
                <InfoWord>Info:</InfoWord> (Nov 30 9:57 am) Obtained floating license for 'pointwise' feature. License server is 'srv-app-t-080.zhaw.ch'. Customer ID is 'DE052'. License expires in 91 days.
                <br />
                <InfoWord>Info:</InfoWord> Loaded entities and settings from Pointwise V18.3 project file E:/Data/010_Tools/060_ADflow/005_Dev/MACH-Aero/tutorial/overset/geo/onera_m6.pw.
                <br />
                <InfoWord>Info:</InfoWord> Created connector <MessageLink>con-13</MessageLink>.
                <br />
                <InfoWord>Info:</InfoWord> Created connector <MessageLink>con-14</MessageLink>.
              </MessageText>
              <ScrollBar>
                <Chevron up />
                <ScrollThumb />
                <Chevron />
              </ScrollBar>
            </MessagePane>
          </MessageDock>
        </CenterColumn>
        <RightToolbar>
          <VerticalGrip />
          <SideButton><AxisIcon label="+X" /></SideButton>
          <SideButton><AxisIcon label="-X" /></SideButton>
          <SideButton><AxisIcon label="+Y" /></SideButton>
          <SideButton><AxisIcon label="-Y" /></SideButton>
          <SideButton><AxisIcon label="+Z" /></SideButton>
          <SideButton><AxisIcon label="-Z" /></SideButton>
          <SideSeparator />
          <SideButton><AxisIcon label="n" hat /></SideButton>
          <SideSeparator />
          {["globe", "plane", "curve", "points", "domain", "star", "grid", "axes", "axesOff", "cube", "hash"].map((name) => (
            <SideIcon key={name} name={name} />
          ))}
          <SideSeparator $full />
          <LowerGrip />
          {["mask", "block", "planeCheck", "curveCheck", "domainCheck", "starCheck", "diamondBox", "triangleBox", "selectBox"].map((name) => (
            <SideIcon key={name} name={name} />
          ))}
        </RightToolbar>
      </MainRow>
      <StatusBar>
        <LightCell $width={135}>
          <svg width="18" height="18" viewBox="0 0 18 18">
            <path d="M5.5 0h7L18 5.5v7L12.5 18h-7L0 12.5v-7z" fill="#808080" stroke="#a8a8a8" />
          </svg>
          <ProgressStack>
            <ProgressTrack />
            <ProgressTrack />
          </ProgressStack>
        </LightCell>
        <GridCell $width={82}>
          <SolverIcons>
            <svg width="16" height="16" viewBox="0 0 16 16">
              <rect width="16" height="16" fill="#0f9c98" />
              <path d="M4 0v16M8 0v16M12 0v16M0 4h16M0 8h16M0 12h16" stroke="#066a68" />
            </svg>
            <svg width="16" height="16" viewBox="0 0 16 16">
              <path d="M1 5l4-4h10v10l-4 4H1z" fill="#b81818" />
              <path d="M1 5h10v10H1z" fill="#c82020" />
              <path d="M11 5l4-4v10l-4 4z" fill="#7c0c0c" />
            </svg>
            <svg width="20" height="16" viewBox="0 0 20 16">
              <text x="3" y="13" fontFamily="Liberation Sans" fontWeight="700" fontSize="11" fill="#999">3D</text>
              <text x="1" y="11" fontFamily="Liberation Sans" fontWeight="700" fontSize="11" fill="#111">3D</text>
            </svg>
          </SolverIcons>
          <SolverName>CGNS</SolverName>
        </GridCell>
        <StatusCell $width={36} />
        <StatusCell $width={619} />
        <StatusCell $width={113} />
        <StatusCell $width={114} />
        <StatusCell $width={89} />
      </StatusBar>
      <Marks />
    </Window>
  );
};

export default App;
